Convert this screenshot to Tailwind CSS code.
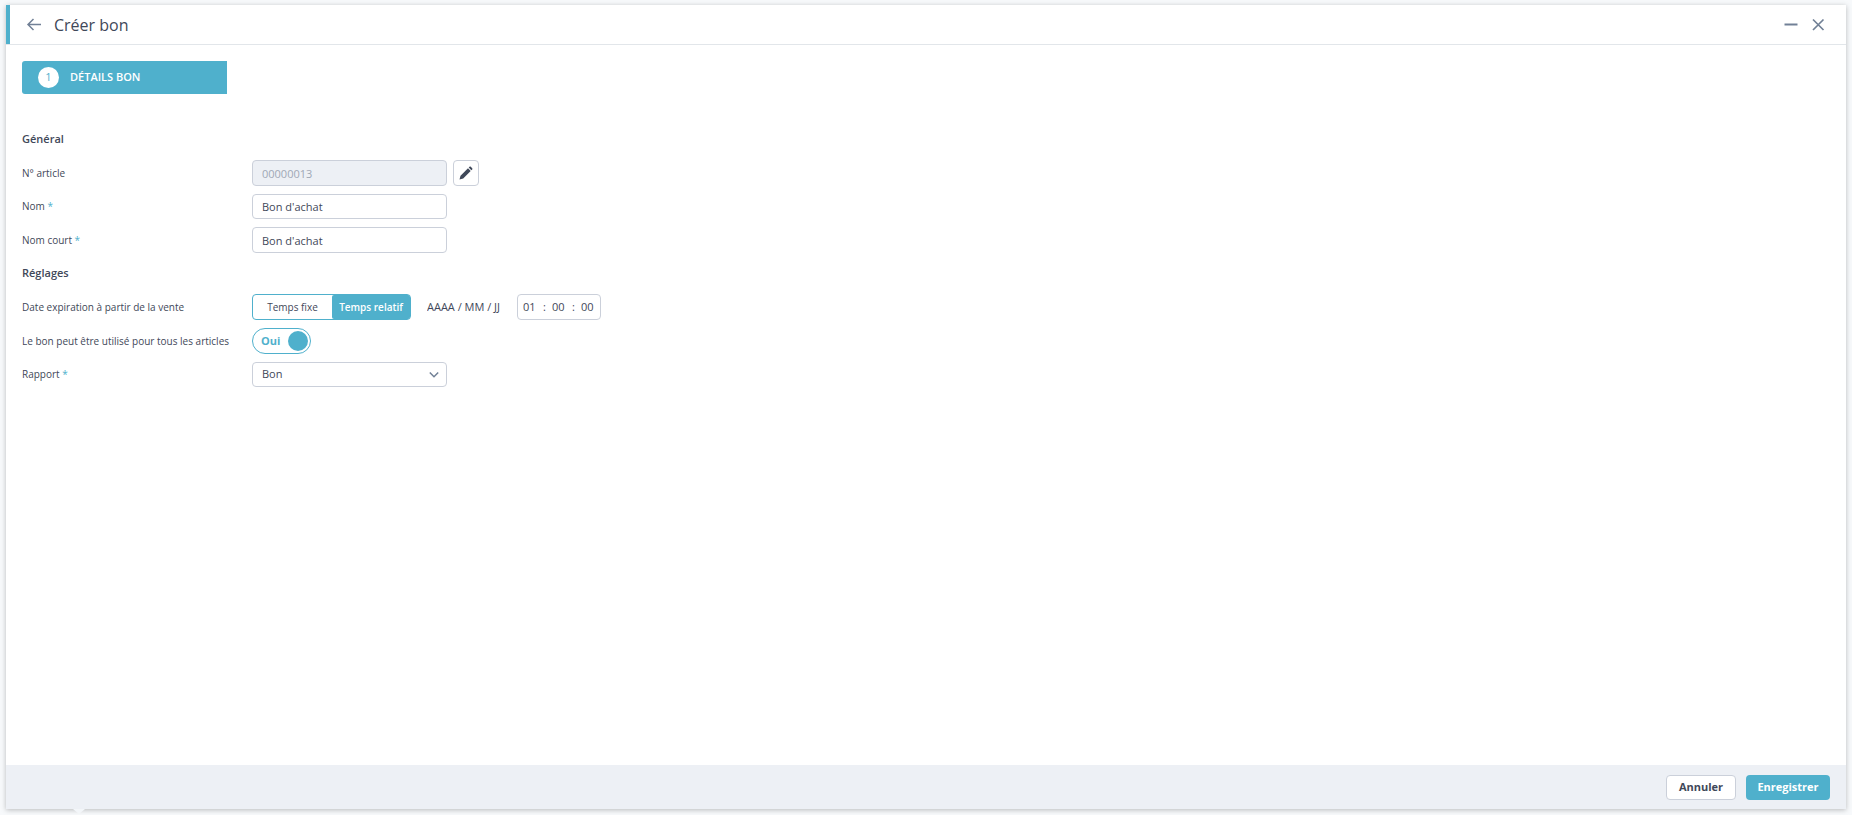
<!DOCTYPE html>
<html lang="fr">
  <head>
    <meta charset="UTF-8" />
    <meta name="viewport" content="width=device-width, initial-scale=1.0" />
    <title>Créer bon</title>
    <script src="https://cdn.jsdelivr.net/npm/@tailwindcss/browser@4"></script>
  </head>
  <body
    class="h-screen bg-[#f7f9fb] px-[6px] pt-[5px] pb-[6px] font-['Open_Sans','Noto_Sans',sans-serif] text-[11px] text-[#3f4859]"
  >
    <form
      class="relative flex h-full flex-col bg-white shadow-[0_1px_5px_rgba(0,0,0,0.25)]"
    >
      <!-- Header -->
      <header
        class="flex h-[40px] shrink-0 items-center border-b border-[#e2e6ea] pr-[20px]"
      >
        <span class="h-full w-1 bg-[#4fb0cc]"></span>
        <button type="button" aria-label="Retour" class="ml-[16px]">
          <svg
            class="h-[16px] w-[16px]"
            viewBox="0 0 16 16"
            fill="none"
            stroke="#718096"
            stroke-width="1.5"
          >
            <path d="M15 7.500H2M7.500 2L2 7.500l5.500 5.500" />
          </svg>
        </button>
        <h1 class="ml-[12px] text-[16px] leading-[22px]">Créer bon</h1>
        <div class="ml-auto flex items-center gap-[11px]">
          <button type="button" aria-label="Réduire">
            <svg class="h-[16px] w-[16px]" viewBox="0 0 16 16">
              <path d="M1.500 6.500h13v2h-13z" fill="#718096" />
            </svg>
          </button>
          <button type="button" aria-label="Fermer">
            <svg
              class="h-[16px] w-[16px]"
              viewBox="0 0 16 16"
              fill="none"
              stroke="#718096"
              stroke-width="1.7"
            >
              <path d="M3 2.500l10.500 10.500M13.500 2.500L3 13" />
            </svg>
          </button>
        </div>
      </header>

      <!-- Content -->
      <main class="flex-1 px-[16px] pt-[16px]">
        <div
          class="flex h-[33px] w-[205px] items-center gap-[11px] rounded-l-[3px] bg-[#4fb0cc] pl-[16px] font-semibold text-white"
        >
          <span
            class="flex h-[21px] w-[21px] items-center justify-center rounded-full bg-white font-normal text-[#4fb0cc]"
            >1</span
          >
          <span>DÉTAILS BON</span>
        </div>

        <div class="mt-[33px] flex flex-col gap-[8px]">
          <h2 class="flex h-[25px] items-center font-semibold">Général</h2>
          <div class="flex h-[26px] items-center">
            <label for="article" class="w-[230px] text-[10px]">N° article</label>
            <input
              id="article"
              type="text"
              value="00000013"
              disabled
              class="h-full w-[195px] rounded-[4px] border border-[#cbd0da] bg-[#edf0f5] px-[9px] text-[#a0a8b5]"
            />
            <button
              type="button"
              aria-label="Modifier"
              class="ml-[6px] flex h-full w-[26px] items-center justify-center rounded-[4px] border border-[#cbd0da]"
            >
              <svg class="h-[14px] w-[14px]" viewBox="0 0 14 14" fill="#3f4859">
                <path
                  d="M.5 13.500l1-3.700L9 2.300l2.700 2.700-7.500 7.500zM9.700 1.600l.8-.8c.4-.4.900-.4 1.300 0l1.400 1.400c.4.4.4.900 0 1.300l-.8.8z"
                />
              </svg>
            </button>
          </div>
          <div class="flex h-[25px] items-center">
            <label for="nom" class="w-[230px] text-[10px]"
              >Nom <span class="text-[#4fb0cc]">*</span></label
            >
            <input
              id="nom"
              type="text"
              value="Bon d'achat"
              class="h-full w-[195px] rounded-[4px] border border-[#cbd0da] px-[9px]"
            />
          </div>
          <div class="flex h-[26px] items-center">
            <label for="nomCourt" class="w-[230px] text-[10px]"
              >Nom court <span class="text-[#4fb0cc]">*</span></label
            >
            <input
              id="nomCourt"
              type="text"
              value="Bon d'achat"
              class="h-full w-[195px] rounded-[4px] border border-[#cbd0da] px-[9px]"
            />
          </div>

          <h2 class="flex h-[25px] items-center font-semibold">Réglages</h2>
          <div class="flex h-[26px] items-center">
            <span id="expLabel" class="w-[230px] text-[10px]"
              >Date expiration à partir de la vente</span
            >
            <div
              role="group"
              aria-labelledby="expLabel"
              class="flex h-full w-[159px] rounded-[4px] border border-[#4fb0cc] text-[10px]"
            >
              <button type="button" aria-pressed="false" class="flex-1">
                Temps fixe
              </button>
              <button
                type="button"
                aria-pressed="true"
                class="w-[78px] rounded-[2px] bg-[#4fb0cc] font-semibold text-white"
              >
                Temps relatif
              </button>
            </div>
            <input
              type="text"
              aria-label="Date"
              placeholder="AAAA / MM / JJ"
              class="ml-[16px] w-[90px] placeholder:text-[#3f4859]"
            />
            <div
              class="flex h-full w-[84px] items-center justify-between rounded-[4px] border border-[#cbd0da] px-[5px]"
            >
              <input type="text" value="01" aria-label="Heures" class="w-[14px]" />
              <span>:</span>
              <input type="text" value="00" aria-label="Minutes" class="w-[14px]" />
              <span>:</span>
              <input type="text" value="00" aria-label="Secondes" class="w-[14px]" />
            </div>
          </div>
          <div class="flex h-[26px] items-center">
            <label for="tous" class="w-[230px] text-[10px]"
              >Le bon peut être utilisé pour tous les articles</label
            >
            <label
              class="flex h-full w-[59px] items-center justify-between rounded-full border border-[#4fb0cc] pr-[2px] pl-[8px] font-bold text-[#4fb0cc]"
            >
              Oui
              <input
                id="tous"
                type="checkbox"
                role="switch"
                checked
                class="h-[20px] w-[20px] appearance-none rounded-full bg-[#4fb0cc]"
              />
            </label>
          </div>
          <div class="flex h-[25px] items-center">
            <label for="rapport" class="w-[230px] text-[10px]"
              >Rapport <span class="text-[#4fb0cc]">*</span></label
            >
            <div class="grid h-full w-[195px] items-center">
              <select
                id="rapport"
                class="col-start-1 row-start-1 h-full appearance-none rounded-[4px] border border-[#cbd0da] bg-white px-[9px]"
              >
                <option>Bon</option>
              </select>
              <svg
                class="pointer-events-none col-start-1 row-start-1 mr-[8px] h-[10px] w-[10px] justify-self-end"
                viewBox="0 0 10 10"
                fill="none"
                stroke="#718096"
                stroke-width="1.5"
              >
                <path d="M.8 2.500L5 6.700l4.200-4.200" />
              </svg>
            </div>
          </div>
        </div>
      </main>

      <!-- Footer -->
      <footer
        class="flex h-[44px] shrink-0 items-center justify-end gap-[10px] bg-[#edf0f5] px-[16px]"
      >
        <button
          type="button"
          class="h-[25px] w-[70px] rounded-[4px] border border-[#cbd0da] bg-white font-bold"
        >
          Annuler
        </button>
        <button
          type="submit"
          class="h-[25px] w-[84px] rounded-[4px] bg-[#4fb0cc] font-bold text-white"
        >
          Enregistrer
        </button>
      </footer>
      <svg
        class="absolute top-full left-[67px] h-[5px] w-[12px]"
        viewBox="0 0 12 5"
        fill="#f3f6f9"
      >
        <path d="M0 0h12L6 5z" />
      </svg>
    </form>
  </body>
</html>
